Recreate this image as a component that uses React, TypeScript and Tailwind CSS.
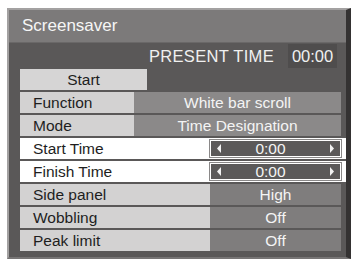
const font = { fontFamily: '"Liberation Sans", Arial, sans-serif' };

type Row = { label: string; value: string; kind: "wide" | "time" | "narrow" };

const rows: Row[] = [
  { label: "Function", value: "White bar scroll", kind: "wide" },
  { label: "Mode", value: "Time Designation", kind: "wide" },
  { label: "Start Time", value: "0:00", kind: "time" },
  { label: "Finish Time", value: "0:00", kind: "time" },
  { label: "Side panel", value: "High", kind: "narrow" },
  { label: "Wobbling", value: "Off", kind: "narrow" },
  { label: "Peak limit", value: "Off", kind: "narrow" },
];

function Arrow({ dir }: { dir: "l" | "r" }) {
  return (
    <svg width="4" height="9" viewBox="0 0 4 9" className="shrink-0">
      {dir === "l" ? (
        <path d="M4 0 L0 4.5 L4 9 Z" fill="#f2f2f2" />
      ) : (
        <path d="M0 0 L4 4.5 L0 9 Z" fill="#f2f2f2" />
      )}
    </svg>
  );
}

function MenuRow({ row }: { row: Row }) {
  if (row.kind === "wide") {
    return (
      <div className="flex h-[21px]">
        <div className="flex w-[114px] items-center bg-[#d3d2d2] pl-[13px] text-[15.5px] text-[#1e1e1e]">
          {row.label}
        </div>
        <div className="flex w-[207px] items-center justify-center bg-[#8b8989] text-[15.5px] text-[#f4f4f4]">
          {row.value}
        </div>
      </div>
    );
  }
  if (row.kind === "time") {
    return (
      <div className="flex h-[21px] bg-white">
        <div className="flex w-[190px] items-center pl-[13px] text-[15.5px] text-[#1e1e1e]">
          {row.label}
        </div>
        <div className="flex w-[131px] items-center py-[2px]">
          <div className="flex h-full w-full items-center justify-between border border-white bg-[#5b5959] px-[6px] text-[15.5px] text-[#f4f4f4] outline outline-1 outline-[#8a8888]">
            <Arrow dir="l" />
            <span className="-ml-[10px]">{row.value}</span>
            <Arrow dir="r" />
          </div>
        </div>
      </div>
    );
  }
  return (
    <div className="flex h-[21px]">
      <div className="flex w-[190px] items-center bg-[#d3d2d2] pl-[13px] text-[15.5px] text-[#1e1e1e]">
        {row.label}
      </div>
      <div className="flex w-[131px] items-center justify-center bg-[#7f7d7d] text-[15.5px] text-[#f4f4f4]">
        {row.value}
      </div>
    </div>
  );
}

export default function App() {
  return (
    <div className="h-[262px] w-[351px] overflow-hidden bg-white pl-[7px] pt-[8px]" style={font}>
      <div className="flex h-[251px] w-[344px] flex-col border-l-2 border-t-2 border-[#a3a1a1] border-r-[5px] border-r-[#343232] border-b-2 border-b-[#777575] bg-[#5a5858]">
        <div className="flex h-[33px] shrink-0 items-center border-b border-[#6a6868] bg-[#7c7a7a] pl-[13px] text-[17px] text-[#f6f6f6]">
          Screensaver
        </div>
        <div className="flex flex-col pl-[11px]">
          <div className="flex h-[26px] items-center text-[16.5px] text-[#f0f0f0]">
            <span className="ml-[129px] tracking-[0.3px]">PRESENT TIME</span>
            <span className="ml-[14px] bg-[#4f4d4d] px-[4px]">00:00</span>
          </div>
          <div className="flex h-[21px] w-[127px] items-center justify-center bg-[#d6d5d5] text-[15.5px] text-[#1e1e1e]">
            Start
          </div>
          <div className="mt-[2px] flex flex-col gap-[2px]">
            {rows.map((r) => (
              <MenuRow key={r.label} row={r} />
            ))}
          </div>
        </div>
      </div>
    </div>
  );
}
